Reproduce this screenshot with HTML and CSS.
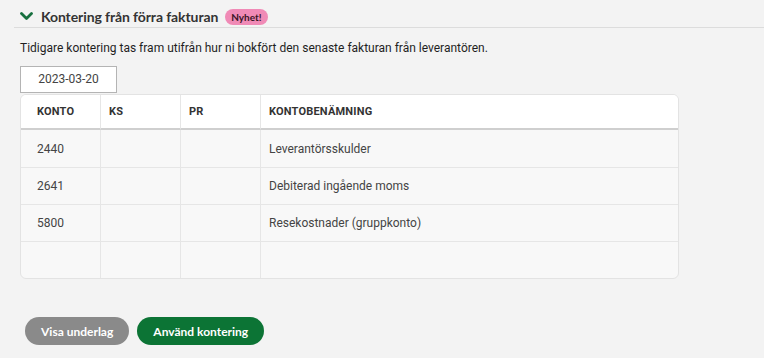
FILE: index.html
```html
<!DOCTYPE html>
<html lang="sv">

<head>
    <meta charset="UTF-8">
    <meta name="viewport" content="width=device-width, initial-scale=1.0">
    <title>Kontering från förra fakturan</title>
    <link rel="stylesheet" href="styles.css">
</head>

<body>
    <div class="panel">
        <div class="panel_head">
            <svg class="chevron" width="13" height="9" viewBox="0 0 13 9">
                <path d="M1.5 1.5 L6.5 6.5 L11.5 1.5" fill="none" stroke="#17703f" stroke-width="2.8" stroke-linecap="round" stroke-linejoin="round"/>
            </svg>
            <h2 class="title">Kontering från förra fakturan</h2>
            <span class="badge">Nyhet!</span>
        </div>

        <div class="panel_body">
            <p class="intro">Tidigare kontering tas fram utifrån hur ni bokfört den senaste fakturan från leverantören.</p>

            <div class="date_box">2023-03-20</div>

            <table class="konto_table">
                <thead>
                    <tr>
                        <th>Konto</th>
                        <th>KS</th>
                        <th>PR</th>
                        <th>Kontobenämning</th>
                    </tr>
                </thead>
                <tbody>
                    <tr>
                        <td>2440</td>
                        <td></td>
                        <td></td>
                        <td>Leverantörsskulder</td>
                    </tr>
                    <tr>
                        <td>2641</td>
                        <td></td>
                        <td></td>
                        <td>Debiterad ingående moms</td>
                    </tr>
                    <tr>
                        <td>5800</td>
                        <td></td>
                        <td></td>
                        <td>Resekostnader (gruppkonto)</td>
                    </tr>
                    <tr>
                        <td></td>
                        <td></td>
                        <td></td>
                        <td></td>
                    </tr>
                </tbody>
            </table>

            <div class="actions">
                <button class="btn btn_grey">Visa underlag</button>
                <button class="btn btn_green">Använd kontering</button>
            </div>
        </div>
    </div>
</body>

</html>
```

FILE: styles.css
```css
* {
    margin: 0;
    padding: 0;
    box-sizing: border-box;
}

body {
    background: #f3f3f3;
    font-family: Roboto, "Liberation Sans", sans-serif;
    color: #222;
}

.panel_head {
    display: flex;
    align-items: center;
    height: 28px;
    margin-left: 14px;
    padding-left: 6px;
    padding-top: 6px;
    border-bottom: 1px solid #dcdcdc;
}

.chevron {
    margin-right: 8px;
}

.title {
    font-family: Lato, "Open Sans", sans-serif;
    font-size: 14px;
    font-weight: 700;
    color: #333;
    letter-spacing: -.1px;
}

.badge {
    margin-left: 7px;
    padding: 2px 6px;
    border-radius: 9px;
    background: #f08ab6;
    color: #3a1526;
    font-family: Lato, sans-serif;
    font-size: 10px;
    font-weight: 700;
}

.panel_body {
    padding: 13px 20px 0 20px;
}

.intro {
    font-size: 12px;
    color: #1f1f1f;
}

.date_box {
    width: 97px;
    height: 27px;
    margin-top: 11px;
    border: 1px solid #b4b4b4;
    background: #fff;
    font-size: 12px;
    color: #444;
    line-height: 25px;
    text-align: center;
}

.konto_table {
    width: 659px;
    margin-top: 1px;
    border-collapse: separate;
    border-spacing: 0;
    border: 1px solid #e3e3e3;
    border-radius: 6px;
    overflow: hidden;
    background: #f8f8f8;
}

.konto_table th,
.konto_table td {
    height: 37px;
    padding: 0 8px;
    text-align: left;
    border-right: 1px solid #e6e6e6;
}

.konto_table th:first-child,
.konto_table td:first-child {
    padding-left: 16px;
}

.konto_table th:last-child,
.konto_table td:last-child {
    border-right: none;
}

.konto_table th {
    height: 35px;
    background: #fff;
    border-bottom: 2px solid #cfcfcf;
    font-size: 11px;
    font-weight: 700;
    text-transform: uppercase;
    color: #333;
    letter-spacing: .2px;
}

.konto_table td {
    font-size: 12px;
    color: #444;
    border-top: 1px solid #e6e6e6;
}

.konto_table tbody tr:first-child td {
    border-top: none;
}

.konto_table th:nth-child(1),
.konto_table th:nth-child(2),
.konto_table th:nth-child(3) {
    width: 80px;
}

.actions {
    display: flex;
    gap: 8px;
    margin-top: 38px;
    padding-left: 5px;
}

.btn {
    height: 28px;
    padding: 0 16px;
    border: none;
    border-radius: 14px;
    color: #fff;
    font-family: Lato, sans-serif;
    font-size: 12px;
    font-weight: 700;
}

.btn_grey {
    background: #8a8a8a;
}

.btn_green {
    background: #0c7435;
}
```
